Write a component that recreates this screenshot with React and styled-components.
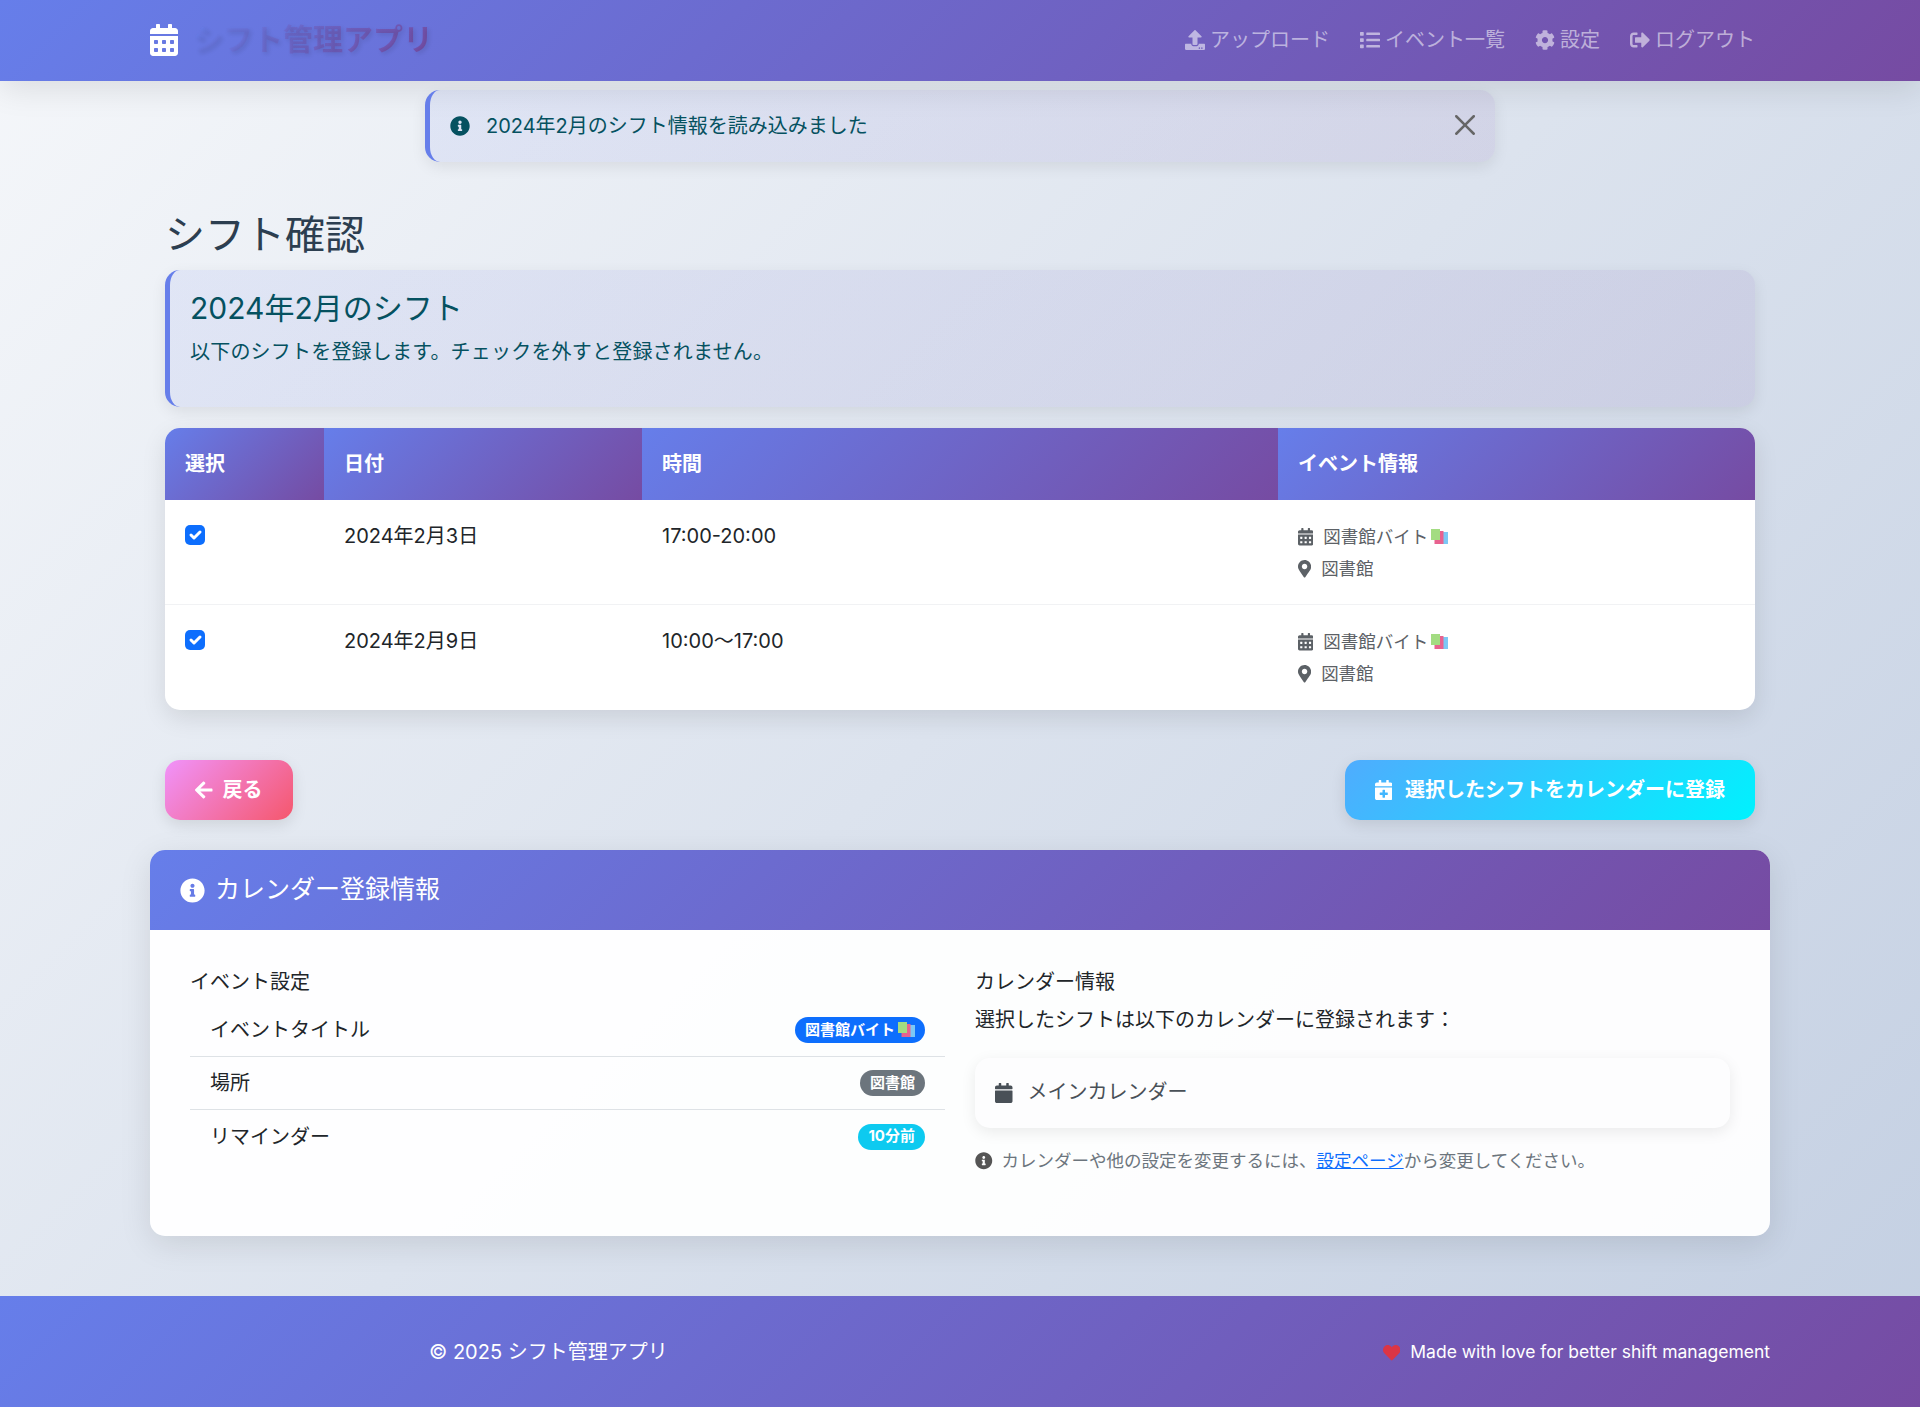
import styled, { createGlobalStyle } from 'styled-components';
import {
    FaCalendarAlt, FaCalendar, FaCalendarPlus, FaUpload, FaList, FaCog, FaSignOutAlt,
    FaInfoCircle, FaMapMarkerAlt, FaArrowLeft, FaHeart,
} from 'react-icons/fa';

const shifts = [
    { date: '2024年2月3日', time: '17:00-20:00' },
    { date: '2024年2月9日', time: '10:00～17:00' },
];

function App() {
    return (
        <>
            <GlobalStyle />
            <Navbar>
                <Brand>
                    <CalendarAltIcon />
                    <BrandText>シフト管理アプリ</BrandText>
                </Brand>
                <NavLinks>
                    <NavLink><FaUpload />アップロード</NavLink>
                    <NavLink><FaList />イベント一覧</NavLink>
                    <NavLink><FaCog />設定</NavLink>
                    <NavLink><FaSignOutAlt />ログアウト</NavLink>
                </NavLinks>
            </Navbar>

            <Main>
                <Toast>
                    <FaInfoCircle />
                    <ToastText>2024年2月のシフト情報を読み込みました</ToastText>
                    <CloseButton aria-label="閉じる">
                        <svg viewBox="0 0 16 16" width="20" height="20" fill="#666">
                            <path d="M.293.293a1 1 0 0 1 1.414 0L8 6.586 14.293.293a1 1 0 1 1 1.414 1.414L9.414 8l6.293 6.293a1 1 0 0 1-1.414 1.414L8 9.414l-6.293 6.293a1 1 0 0 1-1.414-1.414L6.586 8 .293 1.707a1 1 0 0 1 0-1.414z" />
                        </svg>
                    </CloseButton>
                </Toast>

                <PageTitle>シフト確認</PageTitle>

                <InfoBox>
                    <h4>2024年2月のシフト</h4>
                    <p>以下のシフトを登録します。チェックを外すと登録されません。</p>
                </InfoBox>

                <TableWrap>
                    <Table>
                        <colgroup>
                            <col width="159" />
                            <col width="318" />
                            <col width="636" />
                            <col width="477" />
                        </colgroup>
                        <thead>
                            <tr>
                                <th>選択</th>
                                <th>日付</th>
                                <th>時間</th>
                                <th>イベント情報</th>
                            </tr>
                        </thead>
                        <tbody>
                            {shifts.map((s) => (
                                <tr key={s.date}>
                                    <td><Check type="checkbox" defaultChecked /></td>
                                    <td>{s.date}</td>
                                    <td>{s.time}</td>
                                    <td>
                                        <EventLine><CalendarAltIcon />図書館バイト<Books /></EventLine>
                                        <EventLine><PinIcon />図書館</EventLine>
                                    </td>
                                </tr>
                            ))}
                        </tbody>
                    </Table>
                </TableWrap>

                <Actions>
                    <BackButton><ArrowIcon /><span>戻る</span></BackButton>
                    <SubmitButton><CalendarPlusIcon /><span>選択したシフトをカレンダーに登録</span></SubmitButton>
                </Actions>

                <Card>
                    <CardHeader><FaInfoCircle />カレンダー登録情報</CardHeader>
                    <CardBody>
                        <div>
                            <ColTitle>イベント設定</ColTitle>
                            <SettingRow>イベントタイトル<Badge $bg="#0d6efd">図書館バイト<Books /></Badge></SettingRow>
                            <SettingRow>場所<Badge $bg="#6c757d">図書館</Badge></SettingRow>
                            <SettingRow $last>リマインダー<Badge $bg="#0dcaf0">10分前</Badge></SettingRow>
                        </div>
                        <div>
                            <ColTitle>カレンダー情報</ColTitle>
                            <Lead>選択したシフトは以下のカレンダーに登録されます：</Lead>
                            <CalendarBox><CalendarIcon /><span>メインカレンダー</span></CalendarBox>
                            <Note>
                                <FaInfoCircle />
                                カレンダーや他の設定を変更するには、<a href="#settings">設定ページ</a>から変更してください。
                            </Note>
                        </div>
                    </CardBody>
                </Card>
            </Main>

            <Footer>
                <Copyright>© 2025 シフト管理アプリ</Copyright>
                <Love><FaHeart />Made with love for better shift management</Love>
            </Footer>
        </>
    )
}

export default App;

// the books emoji, drawn since no colour emoji font is installed
function Books() {
    return (
        <BooksIcon viewBox="0 0 17 16">
            <rect x="6" y="3" width="11" height="12" fill="#7cc8f5" />
            <rect x="3.5" y="2" width="9" height="13" fill="#e8628f" />
            <rect x="0" y="0" width="9" height="11" fill="#a3dc82" />
        </BooksIcon>
    )
}

const GlobalStyle = createGlobalStyle`
* {
    box-sizing: border-box;
}

body {
    margin: 0;
    min-height: 1407px;
    font-family: Inter, "Noto Sans CJK JP", sans-serif;
    font-size: 20px;
    line-height: 1.5;
    color: #212529;
    background: linear-gradient(135deg, #f5f7fa 0%, #c3cfe2 100%);
}

svg {
    flex-shrink: 0;
}
`

const gradient = 'linear-gradient(135deg, #667eea 0%, #764ba2 100%)';

// react-icons draws every icon in a 1em square, these are narrower
const CalendarAltIcon = styled(FaCalendarAlt)`
width: 0.875em;
`

const CalendarIcon = styled(FaCalendar)`
width: 0.875em;
`

const CalendarPlusIcon = styled(FaCalendarPlus)`
width: 0.875em;
`

const ArrowIcon = styled(FaArrowLeft)`
width: 0.875em;
`

const PinIcon = styled(FaMapMarkerAlt)`
width: 0.75em;
`

const BooksIcon = styled.svg`
width: 17px;
height: 16px;
margin-left: 3px;
`

const Navbar = styled.nav`
height: 81px;
display: flex;
justify-content: space-between;
align-items: center;
padding: 0 165px 0 150px;
background: ${gradient};
box-shadow: 0 8px 32px rgba(0, 0, 0, 0.1);
`

const Brand = styled.div`
display: flex;
align-items: center;
gap: 15px;
margin-top: -2px;
color: #fff;
font-size: 32px;
font-weight: 700;
`

const BrandText = styled.span`
background: ${gradient};
-webkit-background-clip: text;
background-clip: text;
color: transparent;
text-shadow: 2px 2px 4px rgba(0, 0, 0, 0.1);
font-size: 30px;
`

const NavLinks = styled.div`
display: flex;
align-items: center;
gap: 30px;
margin-top: -2px;
`

const NavLink = styled.a`
display: flex;
align-items: center;
gap: 5px;
color: rgba(255, 255, 255, 0.55);
`

const Main = styled.main`
width: 1620px;
margin: 0 auto;
padding: 9px 15px 0;
`

const Toast = styled.div`
width: 1070px;
height: 72px;
margin: 0 auto;
padding: 0 20px;
display: flex;
align-items: center;
color: #055160;
background: linear-gradient(135deg, rgba(102, 126, 234, 0.1), rgba(118, 75, 162, 0.1));
border-left: 5px solid #667eea;
border-radius: 15px;
box-shadow: 0 5px 15px rgba(0, 0, 0, 0.08);
`

const ToastText = styled.span`
flex: 1;
margin-left: 16px;
`

const CloseButton = styled.button`
display: flex;
padding: 0;
margin-top: -2px;
border: 0;
background: none;
`

const PageTitle = styled.h1`
margin: 49px 0 11px;
font-size: 40px;
font-weight: 400;
line-height: 48px;
color: #2c3e50;
`

const InfoBox = styled.div`
height: 137px;
padding: 20px;
color: #055160;
background: linear-gradient(135deg, rgba(102, 126, 234, 0.1), rgba(118, 75, 162, 0.1));
border-left: 5px solid #667eea;
border-radius: 15px;
box-shadow: 0 5px 15px rgba(0, 0, 0, 0.08);

h4 {
    margin: 0 0 11px;
    font-size: 30px;
    font-weight: 400;
    line-height: 36px;
}

p {
    margin: 0;
    letter-spacing: 0.2px;
}
`

const TableWrap = styled.div`
margin-top: 21px;
border-radius: 15px;
overflow: hidden;
background: #fff;
box-shadow: 0 8px 25px rgba(0, 0, 0, 0.1);
`

const Table = styled.table`
width: 100%;
table-layout: fixed;
border-collapse: separate;
border-spacing: 0;

th {
    height: 72px;
    padding: 0 20px;
    text-align: left;
    font-weight: 700;
    color: #fff;
    background: ${gradient};
}

td {
    height: 105px;
    padding: 21px 20px 0;
    vertical-align: top;
    border-bottom: 1px solid #f1f2f4;
}

tr:last-child td {
    border-bottom: 0;
}
`

const Check = styled.input`
appearance: none;
display: block;
width: 20px;
height: 20px;
margin: 4px 0 0;
border-radius: 5px;
background-color: #0d6efd;
background-image: url("data:image/svg+xml,%3csvg xmlns='http://www.w3.org/2000/svg' viewBox='0 0 20 20'%3e%3cpath fill='none' stroke='%23fff' stroke-linecap='round' stroke-linejoin='round' stroke-width='3' d='m6 10 3 3 6-6'/%3e%3c/svg%3e");
`

const EventLine = styled.div`
display: flex;
align-items: center;
height: 32px;
font-size: 17.5px;
color: #5c6166;

svg:first-child {
    margin-right: 10px;
}
`

const Actions = styled.div`
display: flex;
justify-content: space-between;
margin: 50px 0 30px;
`

const ActionButton = styled.button`
display: flex;
align-items: center;
height: 60px;
padding: 0 30px;
gap: 10px;
border: 0;
border-radius: 15px;
color: #fff;
font-family: inherit;
font-size: 20px;
font-weight: 700;
box-shadow: 0 5px 15px rgba(0, 0, 0, 0.1);

span {
    margin-top: -3px;
}
`

const BackButton = styled(ActionButton)`
background: linear-gradient(135deg, #f093fb 0%, #f5576c 100%);
`

const SubmitButton = styled(ActionButton)`
gap: 13px;
background: linear-gradient(135deg, #4facfe 0%, #00f2fe 100%);
`

const Card = styled.section`
margin: 0 -15px;
height: 386px;
border-radius: 15px;
overflow: hidden;
background: rgba(255, 255, 255, 0.95);
box-shadow: 0 8px 32px rgba(0, 0, 0, 0.1);
`

const CardHeader = styled.h5`
display: flex;
align-items: center;
gap: 10px;
height: 80px;
margin: 0;
padding: 0 30px;
font-size: 25px;
font-weight: 400;
color: #fff;
background: ${gradient};
`

const CardBody = styled.div`
display: grid;
grid-template-columns: 755px 755px;
gap: 30px;
padding: 37px 40px 0;
`

const ColTitle = styled.h6`
margin: 0 0 7px;
font-size: 20px;
font-weight: 400;
line-height: 30px;
`

const SettingRow = styled.div`
display: flex;
justify-content: space-between;
align-items: center;
height: 53px;
padding: 0 20px;
border-bottom: ${(props) => (props.$last ? '0' : '1px solid #dee2e6')};
`

const Badge = styled.span`
display: flex;
align-items: center;
height: 26px;
padding: 0 10px;
border-radius: 13px;
font-size: 15px;
font-weight: 700;
color: #fff;
background: ${(props) => props.$bg};
`

const Lead = styled.p`
margin: 8px 0 23px;
`

const CalendarBox = styled.div`
display: flex;
align-items: center;
gap: 15px;
height: 70px;
padding: 0 20px;
color: #495057;
background: #fdfdfe;
border-radius: 15px;
box-shadow: 0 4px 15px rgba(0, 0, 0, 0.08);

span {
    margin-top: -2px;
}
`

const Note = styled.p`
display: flex;
align-items: center;
margin: 20px 0 0;
font-size: 17.5px;
color: #6c757d;

svg {
    margin-right: 9px;
    color: #555;
}

a {
    color: #0d6efd;
}
`

const Footer = styled.footer`
height: 111px;
margin-top: 60px;
padding: 0 150px 0 429px;
display: flex;
justify-content: space-between;
align-items: center;
color: #fff;
background: ${gradient};
`

const Copyright = styled.div``

const Love = styled.div`
display: flex;
align-items: center;
gap: 10px;
font-size: 17.5px;
padding-top: 2px;

svg {
    color: #dc3545;
}
`
